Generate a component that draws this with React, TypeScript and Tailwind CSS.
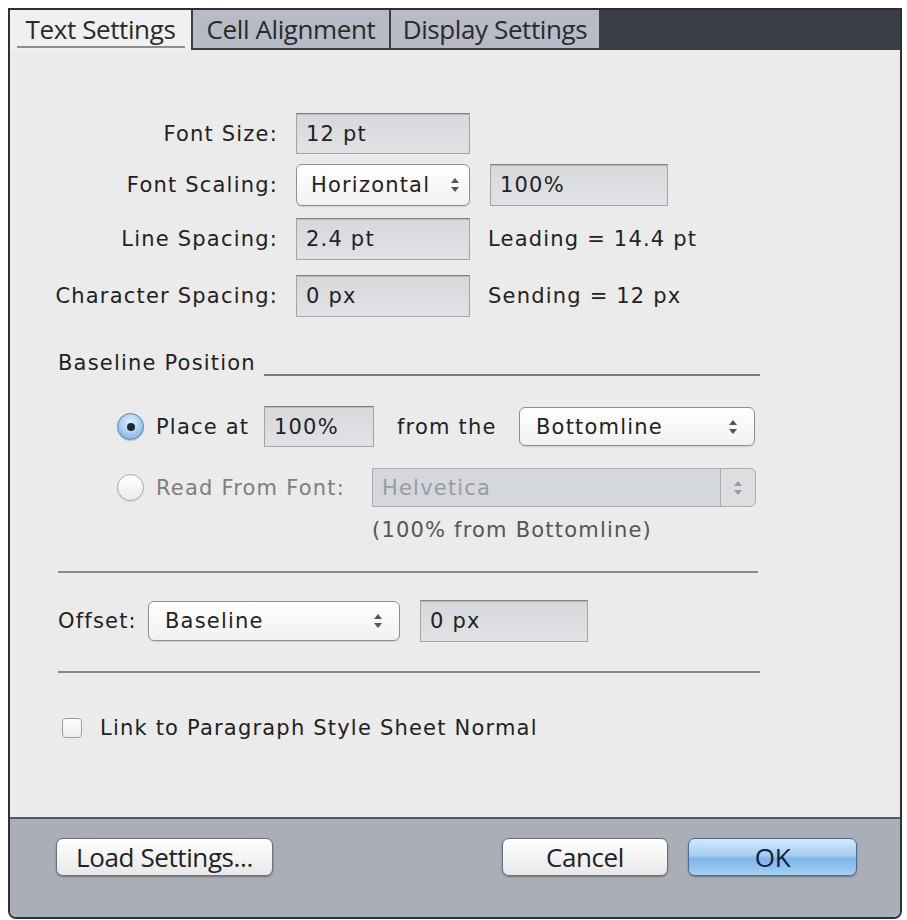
import React from "react";

const UpDownArrows = (props: { className?: string }) => {
	return (
		<svg width="10" height="16" viewBox="0 0 10 16" className={props.className}>
			<path d="M5 1 L9 6 L1 6 Z" fill="currentColor" />
			<path d="M5 15 L9 10 L1 10 Z" fill="currentColor" />
		</svg>
	);
};

const TextField = (props: { value: string; className: string }) => {
	return (
		<div
			className={`flex items-center border border-[#a3a5a9] border-t-[#7d7f83] bg-[linear-gradient(#d6d8dc,#e0e2e5)] pl-[9px] shadow-[inset_0_1px_1px_rgba(0,0,0,0.15)] ${props.className}`}
		>
			{props.value}
		</div>
	);
};

const SelectBox = (props: { value: string; className: string }) => {
	return (
		<div
			className={`flex items-center justify-between rounded-[6px] border border-[#8d8f93] bg-[linear-gradient(#ffffff,#f1f1f1)] shadow-[0_1px_1px_rgba(0,0,0,0.12)] ${props.className}`}
		>
			<span>{props.value}</span>
			<UpDownArrows className="text-[#555]" />
		</div>
	);
};

const FormRow = (props: { label: string; children: React.ReactNode; className: string }) => {
	return (
		<div className={`flex items-center ${props.className}`}>
			<div className="w-[286px] pr-[18px] text-right">{props.label}</div>
			{props.children}
		</div>
	);
};

const Radio = (props: { checked: boolean }) => {
	if (props.checked) {
		return (
			<div className="flex h-[27px] w-[27px] shrink-0 items-center justify-center rounded-full border border-[#5d7fa6] bg-[radial-gradient(circle_at_50%_35%,#e6f2fd,#8fc0ec_70%,#6aa4da)] shadow-[0_1px_1px_rgba(0,0,0,0.2)]">
				<div className="h-[8px] w-[8px] rounded-full bg-[#1d2a3a]" />
			</div>
		);
	}

	return (
		<div className="h-[27px] w-[27px] shrink-0 rounded-full border border-[#a5a7ab] bg-[linear-gradient(#ffffff,#ececec)] shadow-[0_1px_1px_rgba(0,0,0,0.1)]" />
	);
};

const DialogButton = (props: { label: string; className: string; primary?: boolean }) => {
	const colors = props.primary
		? "border-[#4b6c95] bg-[linear-gradient(#d5eafc,#a3cdf2_45%,#7fb6e8_55%,#a4d0f5)] text-[#0f2239]"
		: "border-[#6d7078] bg-[linear-gradient(#ffffff,#f3f3f3_50%,#e8e8e8)] text-[#222]";

	return (
		<div
			className={`flex h-[38px] items-center justify-center rounded-[7px] border shadow-[0_1px_2px_rgba(0,0,0,0.35)] ${colors} ${props.className}`}
		>
			{props.label}
		</div>
	);
};

export default function App() {
	return (
		<div className="h-[920px] w-[907px] bg-white pl-[8px] pt-[8px] font-['DejaVu_Sans',sans-serif] text-[21px] leading-[28px] tracking-[1.2px] text-[#222]">
			<div className="flex h-[911px] w-[894px] flex-col overflow-hidden rounded-b-[8px] border-2 border-[#2f3036]">
				<div className="flex h-[40px] shrink-0 bg-[#3b3d47] font-['Open_Sans',sans-serif] text-[26px] tracking-[-0.4px] text-[#2a2a2a]">
					<div className="relative flex w-[181px] items-center justify-center bg-[#f0f0f0] pb-[2px]">
						Text Settings
						<div className="absolute bottom-[2px] left-[7px] right-[6px] h-[2px] bg-[#8c8c8c]" />
					</div>
					<div className="mb-[2px] ml-[2px] flex w-[196px] items-center justify-center bg-[#b7bbc6]">Cell Alignment</div>
					<div className="mb-[2px] ml-[2px] flex w-[208px] items-center justify-center bg-[#b7bbc6]">Display Settings</div>
				</div>

				<div className="flex flex-1 flex-col bg-[#ebebeb]">
					<FormRow label="Font Size:" className="mt-[63px] h-[41px]">
						<TextField value="12 pt" className="h-[41px] w-[174px]" />
					</FormRow>
					<FormRow label="Font Scaling:" className="mt-[10px] h-[42px]">
						<SelectBox value="Horizontal" className="h-[42px] w-[174px] pl-[14px] pr-[9px]" />
						<TextField value="100%" className="ml-[20px] h-[42px] w-[178px]" />
					</FormRow>
					<FormRow label="Line Spacing:" className="mt-[12px] h-[42px]">
						<TextField value="2.4 pt" className="h-[42px] w-[174px]" />
						<div className="ml-[18px]">Leading = 14.4 pt</div>
					</FormRow>
					<FormRow label="Character Spacing:" className="mt-[15px] h-[42px]">
						<TextField value="0 px" className="h-[42px] w-[174px]" />
						<div className="ml-[18px]">Sending = 12 px</div>
					</FormRow>

					<div className="ml-[48px] mt-[32px] flex h-[28px] w-[702px] items-end">
						<div>Baseline Position</div>
						<div className="mb-[1px] ml-[8px] h-[2px] flex-1 bg-[#7c7c7c]" />
					</div>

					<div className="ml-[107px] mt-[29px] flex h-[41px] items-center">
						<Radio checked={true} />
						<div className="ml-[12px] w-[108px]">Place at</div>
						<TextField value="100%" className="h-[41px] w-[110px]" />
						<div className="ml-[23px] w-[122px]">from the</div>
						<SelectBox value="Bottomline" className="h-[39px] w-[236px] pl-[16px] pr-[16px]" />
					</div>

					<div className="ml-[107px] mt-[21px] flex h-[39px] items-center text-[#7e7e7e]">
						<Radio checked={false} />
						<div className="ml-[12px] w-[216px] whitespace-nowrap">Read From Font:</div>
						<div className="flex h-[39px] w-[384px] items-stretch rounded-r-[6px] border border-[#a9abaf] bg-[#d4d7dc]">
							<div className="flex flex-1 items-center pl-[9px] text-[#9a9ca0]">Helvetica</div>
							<div className="flex w-[35px] items-center justify-center rounded-r-[6px] border-l border-[#a9abaf] bg-[#dcdee2]">
								<UpDownArrows className="text-[#9a9a9a]" />
							</div>
						</div>
					</div>
					<div className="ml-[362px] mt-[9px] text-[#555]">(100% from Bottomline)</div>

					<div className="ml-[48px] mt-[27px] h-[2px] w-[700px] bg-[#8a8a8a]" />

					<div className="ml-[48px] mt-[27px] flex h-[42px] items-center">
						<div className="w-[90px]">Offset:</div>
						<SelectBox value="Baseline" className="h-[40px] w-[252px] pl-[16px] pr-[16px]" />
						<TextField value="0 px" className="ml-[20px] h-[42px] w-[168px]" />
					</div>

					<div className="ml-[48px] mt-[29px] h-[2px] w-[702px] bg-[#8a8a8a]" />

					<div className="ml-[52px] mt-[41px] flex h-[28px] items-center">
						<div className="h-[20px] w-[20px] rounded-[4px] border border-[#9c9ea2] bg-[linear-gradient(#ffffff,#ececec)]" />
						<div className="ml-[18px]">Link to Paragraph Style Sheet Normal</div>
					</div>
				</div>

				<div className="flex h-[100px] shrink-0 items-start border-t-2 border-[#55585f] bg-[#a9aeb7] pt-[19px] font-['Open_Sans',sans-serif] text-[26px] tracking-[-0.4px]">
					<DialogButton label="Load Settings..." className="ml-[46px] w-[217px]" />
					<DialogButton label="Cancel" className="ml-[229px] w-[166px]" />
					<DialogButton label="OK" primary={true} className="ml-[20px] w-[169px]" />
				</div>
			</div>
		</div>
	);
}
